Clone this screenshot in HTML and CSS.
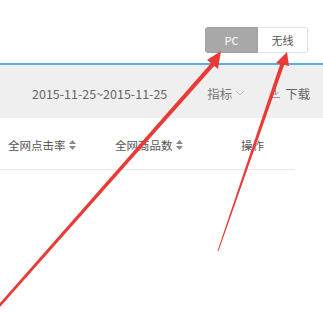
FILE: index.html
```html
<html>
<head>
<meta charset="utf-8">
<title>PC / 无线</title>
<link rel="stylesheet" href="styles.css">
</head>
<body>

<div class="top">
  <div class="switch">
    <span class="sw sw-on">PC</span>
    <span class="sw">无线</span>
  </div>
</div>

<div class="bar">
  <span class="date">2015-11-25~2015-11-25</span>
  <span class="pick">指标 <svg class="chev" width="10" height="6" viewBox="0 0 10 6"><path d="M1 1 L5 5 L9 1" fill="none" stroke="#bbb" stroke-width="1"/></svg></span>
  <span class="dl"><svg class="dl-ico" width="9" height="10" viewBox="0 0 9 10"><path d="M4.5 0 V7 M1.5 4 L4.5 7 L7.5 4 M0 9.5 H9" fill="none" stroke="#999" stroke-width="1"/></svg>下载</span>
</div>

<div class="thead">
  <span class="th th1">全网点击率 <svg class="sort" width="7" height="10" viewBox="0 0 7 10"><path d="M3.5 0 L7 4 H0 Z M0 6 H7 L3.5 10 Z" fill="#8a8a8a"/></svg></span>
  <span class="th th2">全网商品数 <svg class="sort" width="7" height="10" viewBox="0 0 7 10"><path d="M3.5 0 L7 4 H0 Z M0 6 H7 L3.5 10 Z" fill="#8a8a8a"/></svg></span>
  <span class="th th3">操作</span>
</div>

<svg class="arrows" width="323" height="313" viewBox="0 0 323 313">
  <polygon points="0,307 0,303 212,62 215,65" fill="#ea3a36"/>
  <polygon points="221,51 207,60 218,69" fill="#ea3a36"/>
  <polygon points="217.5,251 218.5,251 284.5,64 280.5,63" fill="#ea3a36"/>
  <polygon points="287,52 276,63 289,66" fill="#ea3a36"/>
</svg>

</body>
</html>
```

FILE: styles.css
```css
body {
	margin: 0;
	width: 323px;
	height: 313px;
	background: #fff;
	font-family: "Noto Sans CJK SC", "Liberation Sans", sans-serif;
	overflow: hidden;
	position: relative;
}
.top {
	height: 65px;
	border-bottom: 2px solid #5ab0e6;
	box-sizing: border-box;
	padding-top: 27px;
	display: flex;
	justify-content: flex-end;
	padding-right: 15px;
}
.switch {
	display: flex;
	height: 26px;
}
.sw {
	display: flex;
	align-items: center;
	justify-content: center;
	width: 50px;
	box-sizing: border-box;
	border: 1px solid #e2e2e2;
	border-left: none;
	border-radius: 0 3px 3px 0;
	font-size: 11px;
	color: #555;
}
.sw-on {
	width: 53px;
	background: #a8a8a8;
	border: 1px solid #a0a0a0;
	border-radius: 3px 0 0 3px;
	color: #fff;
}
.bar {
	height: 53px;
	background: #efefef;
	display: flex;
	align-items: center;
	font-size: 12.5px;
	color: #666;
	padding-top: 3px;
	box-sizing: border-box;
}
.date {
	margin-left: 32px;
	font-size: 12.5px;
}
.pick {
	margin-left: 40px;
	color: #777;
	display: flex;
	align-items: center;
}
.chev {
	margin-left: 3px;
}
.dl {
	margin-left: 26px;
	color: #666;
	display: flex;
	align-items: center;
}
.dl-ico {
	margin-right: 5px;
}
.thead {
	width: 295px;
	height: 52px;
	border-bottom: 1px solid #e8e8e8;
	display: flex;
	align-items: center;
	font-size: 11.5px;
	color: #555;
	box-sizing: border-box;
	padding-top: 3px;
}
.th {
	display: flex;
	align-items: center;
}
.th1 {
	margin-left: 8px;
	width: 107px;
}
.th2 {
	width: 126px;
}
.sort {
	margin-left: 3px;
}
.arrows {
	position: absolute;
	left: 0;
	top: 0;
}
```
